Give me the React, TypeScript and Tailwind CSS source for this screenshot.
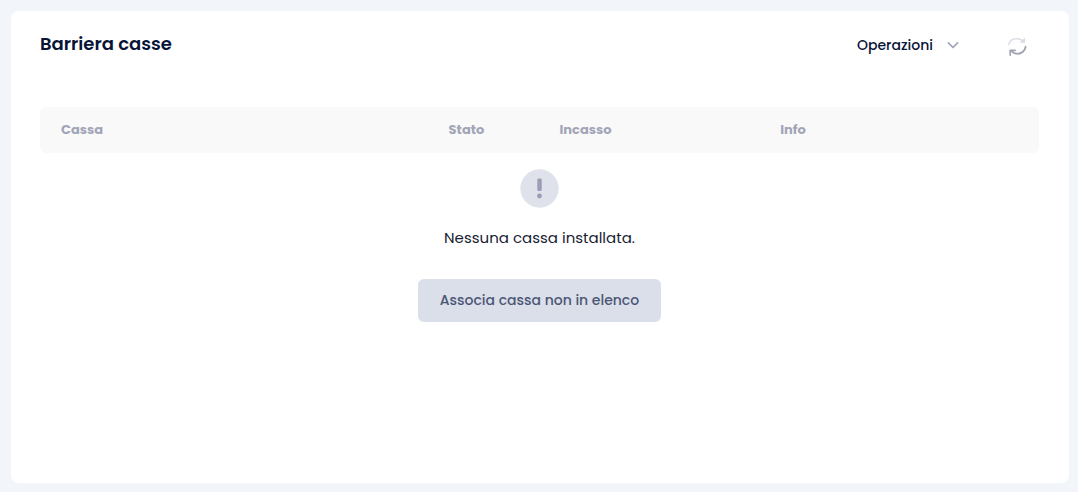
import React from "react";

const columns = [
  { label: "Cassa", width: "w-[38.8%]" },
  { label: "Stato", width: "w-[11.1%]" },
  { label: "Incasso", width: "w-[22.1%]" },
  { label: "Info", width: "w-[28%]" },
];

function ChevronIcon() {
  return (
    <svg className="size-3" viewBox="0 0 12 12" fill="none" aria-hidden="true">
      <path d="M1.4 3.9 6 8.500l4.600-4.600" stroke="#a1a5b7" strokeWidth="1.7" strokeLinecap="round" strokeLinejoin="round" />
    </svg>
  );
}

function RefreshIcon() {
  return (
    <svg className="size-5" viewBox="0 0 20 20" fill="none" strokeLinecap="round" aria-hidden="true">
      <path d="M1.800 8.200C3 4.700 6.200 2.700 9.700 2.700c2.500 0 4.600.900 6.200 2.700" stroke="#e0e1e7" strokeWidth="1.8" />
      <path d="M18 1.400v5.300h-5.400z" fill="#dadbe3" />
      <path d="M18.600 10.600c-.500 4.200-4 7.200-8.100 7.200-2.500 0-4.500-.900-6.100-2.600" stroke="#a1a2b3" strokeWidth="1.8" />
      <path d="M3.200 19.200v-4.800h5" stroke="#a1a2b3" strokeWidth="1.6" strokeLinejoin="round" />
    </svg>
  );
}

function AlertIcon() {
  return (
    <svg className="size-[39px]" viewBox="0 0 39 39" aria-hidden="true">
      <circle cx="19.500" cy="19.500" r="19.200" fill="#dfe2eb" />
      <rect x="17.300" y="9.500" width="4.400" height="12.600" rx="1.400" fill="#9a9db5" />
      <circle cx="19.500" cy="27" r="2.400" fill="#9a9db5" />
    </svg>
  );
}

export default function App() {
  return (
    <main className="flex min-h-screen bg-[#f2f6fa] pt-[11px] pr-[9px] pb-[9px] pl-[11px] font-['Poppins','Inter',sans-serif] text-[#071437]">
      <section className="flex-1 rounded-lg bg-white pt-[15px] pr-[30px] pl-[29px]">
        <header className="flex h-9 items-center justify-between">
          <h1 className="text-[18px] leading-6 font-semibold">Barriera casse</h1>
          <div className="flex items-center gap-12 pt-[2px] pr-3">
            <button type="button" aria-haspopup="menu" className="flex items-center gap-[14px] text-[14px] leading-6 font-medium">
              Operazioni
              <ChevronIcon />
            </button>
            <button type="button" aria-label="Aggiorna" className="pt-[2px]">
              <RefreshIcon />
            </button>
          </div>
        </header>

        <table className="mt-[45px] w-full table-fixed">
          <thead>
            <tr className="h-[46px]">
              {columns.map((column) => (
                <th
                  key={column.label}
                  scope="col"
                  className={`${column.width} bg-[#f9f9f9] px-[21px] text-left text-[13px] leading-5 font-bold text-[#a1a5b7] first:rounded-l-md last:rounded-r-md`}
                >
                  {column.label}
                </th>
              ))}
            </tr>
          </thead>
          <tbody>
            <tr>
              <td colSpan={4} className="pt-4">
                <div className="flex flex-col items-center">
                  <AlertIcon />
                  <p className="mt-[18px] text-[15px] leading-6 text-[#181c32]">Nessuna cassa installata.</p>
                  <button
                    type="button"
                    className="mt-[29px] rounded-md bg-[#dbdfe9] px-[22px] py-[10px] text-[14px] leading-[23px] font-medium text-[#4b5675]"
                  >
                    Associa cassa non in elenco
                  </button>
                </div>
              </td>
            </tr>
          </tbody>
        </table>
      </section>
    </main>
  );
}
